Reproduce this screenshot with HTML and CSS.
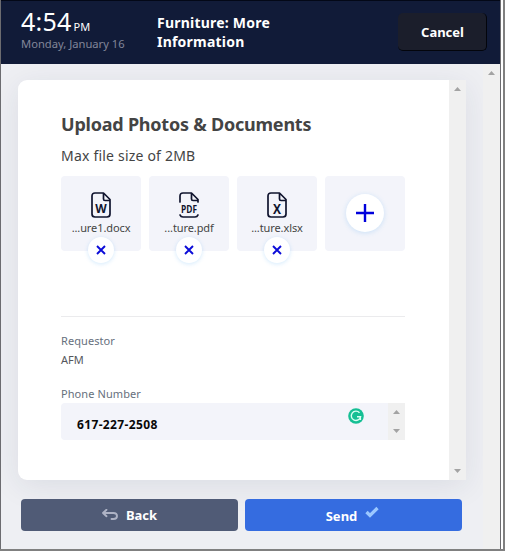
FILE: index.html
```html
<!DOCTYPE html>
<html lang="en">
<head>
<meta charset="utf-8">
<title>Furniture: More Information</title>
<link rel="stylesheet" href="styles.css">
</head>
<body>
<div class="frame">
<div class="window">
  <header class="header">
    <div class="clock">
      <div class="time">4:54<span class="ampm">PM</span></div>
      <div class="date">Monday, January 16</div>
    </div>
    <h1 class="page-title">Furniture: More<br>Information</h1>
    <button class="cancel">Cancel</button>
  </header>
  <div class="body">
    <main class="main">
      <section class="card">
        <div class="content">
          <h2 class="title">Upload Photos &amp; Documents</h2>
          <p class="subtitle">Max file size of 2MB</p>
          <div class="tiles">
            <div class="tile">
              <svg class="file" viewBox="0 0 20 26"><path d="M12.500 1H4Q1 1 1 4v18q0 3 3 3h12q3 0 3-3V7.500zM12.500 1v6q0 1.500 1.500 1.500H19"/><text x="10" y="21" font-size="13" textLength="11.500" lengthAdjust="spacingAndGlyphs">W</text></svg>
              <span class="name">...ure1.docx</span>
              <button class="remove"><svg viewBox="0 0 10 10"><path d="M1 1l8 8M9 1L1 9"/></svg></button>
            </div>
            <div class="tile">
              <svg class="file" viewBox="0 0 20 26"><path d="M1 10V4q0-3 3-3h8.500L19 7.500V10M12.500 1v6q0 1.500 1.500 1.500H19M1 23q.8 2 3 2h12q2.200 0 3-2"/><text x="10" y="20.500" font-size="10.500" textLength="16" lengthAdjust="spacingAndGlyphs">PDF</text></svg>
              <span class="name">...ture.pdf</span>
              <button class="remove"><svg viewBox="0 0 10 10"><path d="M1 1l8 8M9 1L1 9"/></svg></button>
            </div>
            <div class="tile">
              <svg class="file" viewBox="0 0 20 26"><path d="M12.500 1H4Q1 1 1 4v18q0 3 3 3h12q3 0 3-3V7.500zM12.500 1v6q0 1.500 1.500 1.500H19"/><text x="10" y="22" font-size="14" textLength="8" lengthAdjust="spacingAndGlyphs">X</text></svg>
              <span class="name">...ture.xlsx</span>
              <button class="remove"><svg viewBox="0 0 10 10"><path d="M1 1l8 8M9 1L1 9"/></svg></button>
            </div>
            <div class="tile add-tile">
              <button class="add"><svg viewBox="0 0 18 18"><path d="M9 0v18M0 9h18"/></svg></button>
            </div>
          </div>
          <hr class="divider">
          <div class="label">Requestor</div>
          <div class="value">AFM</div>
          <div class="label phone-label">Phone Number</div>
          <div class="input">
            <span class="phone">617-227-2508</span>
            <svg class="grammar" viewBox="0 0 16 16"><circle cx="8" cy="8" r="7.800"/><path d="M11.500 4.700A4.700 4.700 0 1 0 12.600 8.700H9M12.400 8.700v3.300"/></svg>
            <div class="scrollbar small"><i class="up"></i><i class="down"></i></div>
          </div>
        </div>
        <div class="scrollbar"><i class="up"></i><i class="down"></i></div>
      </section>
      <div class="actions">
        <button class="action back"><svg viewBox="0 0 16 11"><path d="M4.500 .8L1 4l3.500 3.200M1 4h10.500q3.500 0 3.500 3t-3.500 3H9.500"/></svg>Back</button>
        <button class="action send">Send<svg viewBox="0 0 14 12"><path d="M1.500 6l3.500 3.500L12.500 2"/></svg></button>
      </div>
    </main>
    <div class="scrollbar outer"><i class="up"></i></div>
  </div>
</div>
</div>
</body>
</html>
```

FILE: styles.css
```css
* { box-sizing: border-box; }
body { margin: 0; background: #fff; font-family: "Noto Sans", sans-serif; color: #444; }
button { font-family: inherit; border: 0; padding: 0; }
h1, h2, p { margin: 0; }
.frame { width: 505px; height: 551px; border-right: 2px solid #808080; border-bottom: 2px solid #808080; }
.window { width: 501px; height: 549px; border-left: 1px solid #6c6c70; border-right: 1px solid #6c6c70; overflow: hidden; }
.header { height: 64px; margin-left: -1px; background: #111b38; border-top: 1px solid #030817; border-left: 1px solid #030817; display: flex; color: #fff; }
.clock { width: 136px; margin-left: 20px; padding-top: 3px; }
.time { height: 32px; font-size: 25px; line-height: 34px; letter-spacing: .2px; white-space: nowrap; }
.ampm { font-size: 11px; letter-spacing: .2px; margin-left: 2px; }
.date { font-size: 11.200px; line-height: 16px; color: #828699; white-space: nowrap; }
.page-title { width: 241px; padding-top: 12px; font-size: 14px; line-height: 19px; letter-spacing: .22px; font-weight: 700; }
.cancel { width: 89px; height: 38px; margin-top: 12px; padding-left: 1px; border-radius: 5px; background: #1b1e2b; border-right: 1px solid #03050c; border-bottom: 1px solid #03050c; color: #fff; font-size: 13px; font-weight: 700; }
.body { display: flex; height: 485px; background: #eeeff3; }
.main { width: 482px; padding: 16px 0 0 17px; overflow: hidden; }
.card { width: 448px; height: 400px; display: flex; background: #fff; border-radius: 9px 0 0 9px; box-shadow: 0 6px 30px rgba(35, 45, 75, .09); }
.content { width: 431px; padding: 31px 44px 0 43px; }
.title { font-size: 18px; line-height: 27px; letter-spacing: -.22px; font-weight: 700; color: #444; white-space: nowrap; }
.subtitle { font-size: 14px; line-height: 20px; letter-spacing: .2px; margin-top: 8px; color: #444; }
.tiles { display: flex; gap: 8px; margin-top: 10px; }
.tile { position: relative; width: 80px; height: 75px; padding-top: 16px; background: #f3f4fa; border-radius: 4px; display: flex; flex-direction: column; align-items: center; }
.file { width: 20px; height: 26px; overflow: visible; fill: none; stroke: #10142e; stroke-width: 1.700; stroke-linejoin: round; stroke-linecap: round; }
.file text { fill: #10142e; stroke: none; font-weight: 700; text-anchor: middle; font-family: "Open Sans", "Noto Sans", sans-serif; }
.name { font-size: 11px; line-height: 16px; letter-spacing: -.1px; margin-top: 2px; white-space: nowrap; color: #444; }
.remove { position: absolute; left: 26.500px; top: 61px; width: 26px; height: 26px; border-radius: 50%; background: #fff; box-shadow: 0 1px 4px rgba(60, 160, 240, .22); display: grid; place-items: center; }
.remove svg { width: 10px; height: 10px; fill: none; stroke: #0b0bd8; stroke-width: 1.900; }
.add-tile { padding-top: 18px; }
.add { width: 38px; height: 38px; border-radius: 50%; background: #fff; box-shadow: 0 1px 5px rgba(60, 160, 240, .22); display: grid; place-items: center; }
.add svg { width: 18px; height: 18px; fill: none; stroke: #0000dc; stroke-width: 2.400; }
.divider { height: 1px; border: 0; margin: 65px 0 16px; background: #ebebed; }
.label { font-size: 11px; line-height: 16px; letter-spacing: .08px; color: #66707d; }
.value { font-size: 11px; line-height: 16px; margin-top: 3px; color: #55575d; }
.phone-label { margin-top: 18px; }
.input { height: 37px; margin-top: 1px; display: flex; background: #f3f4fa; border-radius: 4px 0 0 4px; }
.phone { width: 287px; padding: 13px 0 0 16px; font-size: 12px; line-height: 17px; letter-spacing: .36px; font-weight: 700; color: #080808; }
.grammar { width: 16px; height: 16px; margin: 5px 24px 0 0; flex: none; fill: #15bf94; }
.grammar path { fill: none; stroke: #d9fff3; stroke-width: 1.400; }
.scrollbar { width: 17px; flex: none; background: #f0f0f0; display: flex; flex-direction: column; justify-content: space-between; align-items: center; padding: 7px 0; }
.up, .down { width: 7px; height: 4px; background: #a3a3a3; clip-path: polygon(50% 0, 100% 100%, 0 100%); }
.down { clip-path: polygon(0 0, 100% 0, 50% 100%); }
.outer { justify-content: flex-start; }
.actions { display: flex; gap: 7px; margin: 19px 0 0 3px; }
.action { width: 217px; height: 32px; border-radius: 4px; display: flex; align-items: center; justify-content: center; color: #fff; font-size: 13px; font-weight: 700; line-height: 18px; }
.action svg { fill: none; }
.back { background: #505b76; gap: 8px; }
.back svg { width: 16px; height: 11px; margin-top: -1px; stroke: #aeb3c5; stroke-width: 1.900; stroke-linejoin: round; stroke-linecap: round; }
.send { background: #356ce0; gap: 8px; padding: 2px 2px 0 0; }
.send svg { width: 14px; height: 12px; margin-top: -9px; stroke: #9bc7ff; stroke-width: 3.300; }
```
